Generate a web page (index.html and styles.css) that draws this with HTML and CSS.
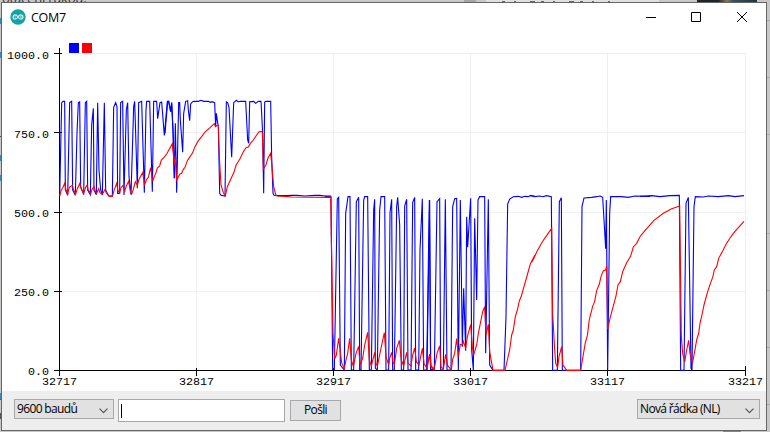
FILE: index.html
```html
<!DOCTYPE html>
<html lang="cs">
<head>
  <meta charset="UTF-8">
  <title>COM7</title>
  <link rel="stylesheet" href="styles.css">
</head>
<body>
  <div class="backdrop">
    <span class="behind-text">otáčení rukou:</span>
    <span class="behind-tab"></span>
    <span class="behind-photo"></span>
    <span class="behind-icon"></span>
    <svg class="behind-marks" width="770" height="432" viewBox="0 0 770 432">
      <path d="M464 1h12" stroke="#a5a5a5" stroke-width="2"/>
      <path d="M502 1.500h108" stroke="#666" stroke-dasharray="3 9 2 14 5 6"/>
      <path d="M767 20.500h3M767 77.500h3M767 134.500h3M767 233.500h3M767 290.500h3M767 347.500h3M767 404.500h3" stroke="#aaa"/>
      <path d="M0 18v6M0 52v6M0 155v6M0 175v6M0 393v6" stroke="#3d87bd" stroke-width="2"/>
      <path d="M0 136v1M0 399v1M0 413v6" stroke="#555" stroke-width="2"/>
    </svg>
  </div>

  <div class="window">
    <div class="titlebar">
      <svg class="logo" width="16" height="16" viewBox="0 0 16 16">
        <circle cx="8" cy="8" r="7.7" fill="#17a1a5"/>
        <path d="M8 8C7 6.500 6.200 5.900 5.200 5.900a2.100 2.100 0 0 0 0 4.200C6.200 10.100 7 9.500 8 8s1.800-2.100 2.800-2.100a2.100 2.100 0 0 1 0 4.200C9.800 10.100 9 9.500 8 8z" fill="none" stroke="#d5f0f0" stroke-width="1.200"/>
        <path d="M4.400 8h1.600M10 8h1.600M10.800 7.200v1.600" stroke="#d5f0f0" stroke-width=".7"/>
      </svg>
      <span class="title">COM7</span>
      <svg class="controls" width="104" height="12" viewBox="0 0 104 12" fill="none" stroke="#000">
        <path d="M0 6.500h10M45.500 1.500h9v9h-9z"/>
        <path d="M91 1l10 10M101 1l-10 10"/>
      </svg>
    </div>

    <svg class="plot" width="764" height="358" viewBox="2 33 764 358">
      <path class="grid" d="M60 53.500h686M60 132.500h686M60 212.500h686M60 291.500h686M196.500 53v317M333.500 53v317M470.500 53v317M607.500 53v317M745.500 53v317"/>
      <rect x="69" y="43" width="10" height="10" fill="#00f"/>
      <rect x="82" y="43" width="10" height="10" fill="#f00"/>
      <path class="axis" d="M59.500 48v328M54 370.500h692M54 53.500h8M54 132.500h8M54 212.500h8M54 291.500h8M196.500 368v8M333.500 368v8M470.500 368v8M607.500 368v8M745.500 366v10"/>

      <g class="blue">
        <polyline transform="translate(55 90) scale(.33333)" points="14,318 20,38 24,34 29,34 31,300 38,316 44,38 50,34 53,300 61,316 66,130 70,38 74,36 77,290 86,314 91,38 95,34 98,300 106,314 110,105 115,55 117,300 124,314 128,38 132,240 137,300 142,314 148,38 152,300 161,318 172,318 176,52 182,38 186,50 188,310 194,310 197,38 203,34 207,315 214,60 218,38 222,260 228,314 236,50 239,34 247,295 251,38 260,34 268,308 273,60 275,34 284,34 292,305 296,34 305,34 308,86 315,38 320,36 328,136 337,34 341,34 347,65 350,38 354,120 358,265"/>
        <polyline transform="translate(165 90) scale(.33333)" points="0,130 8,36 11,34 17,65 20,38 24,120 28,265 31,100 35,308 41,38 44,38 46,90 53,187 56,70 62,34 68,32 70,60 74,92 77,42 82,36 87,34 100,34 108,31 116,34 130,34 136,37 141,35 149,38 152,112 154,70 158,98 160,110 164,310 168,316 180,318 184,36 188,38 192,52 200,202 206,38 214,31 220,36 226,34 242,34 248,150 251,160 254,35 266,34 272,40 280,34 288,34 293,130 296,310 299,36 303,34 317,34 320,200 324,310 327,316 340,317 365,317 380,316 395,316 420,318 450,316 465,316 480,318 498,318"/>
        <polyline transform="translate(325 190) scale(.33333)" points="0,19 18,20 23,538 28,538 36,80 37,26 41,22 46,525 58,540 62,70 69,20 75,20 79,540 86,540 94,35 101,22 104,540 108,540 116,30 119,20 128,20 133,540 139,540 146,60 149,28 151,535 157,540 164,60 168,20 179,20 183,540 191,540 195,68 200,28 203,540 208,540 215,50 218,22 224,105 229,540 236,540 239,48 245,28 249,540 258,540 263,38 269,22 272,540 281,540 285,180 292,26 296,540 306,540 314,30 317,538 328,540"/>
        <polyline transform="translate(425 190) scale(.33333)" points="5,540 13,30 17,540 28,540 36,35 44,26 47,540 55,540 61,28 66,540 78,540 83,50 89,26 95,25 100,540 106,30 112,470 116,295 122,482 125,80 128,172 137,25 140,480 145,540 149,85 155,330 159,30 164,20 179,20 182,490 190,28 194,525 204,541 237,541 243,380 248,42 254,27 265,20 280,19 290,22 300,19 310,20 317,16 330,19"/>
        <polyline transform="translate(530 190) scale(.33333)" points="0,17 15,20 30,18 38,20 50,17 64,20 68,541 82,541 88,35 94,23 97,541 110,541 152,541 156,50 162,24 185,22 200,20 210,18 218,22 227,176 229,30 233,541 239,70 242,20 275,20 295,22 315,18 345,19 360,19"/>
        <polyline transform="translate(640 190) scale(.33333)" points="0,19 20,18 35,17 60,20 90,17 118,16 122,541 132,541 138,40 145,22 153,535 156,541 162,50 166,20 190,21 205,18 235,20 265,17 285,20 312,17"/>
      </g>

      <g class="red">
        <polyline transform="translate(55 90) scale(.33333)" points="14,318 18,302 24,292 29,280 33,300 38,312 43,292 52,286 56,300 62,312 67,296 74,281 79,298 86,310 92,292 96,286 100,300 107,312 112,296 117,290 121,304 125,310 131,296 135,308 142,314 150,298 154,309 160,315 163,319 172,319 177,302 185,280 189,303 194,308 198,293 204,286 209,304 214,288 221,274 226,304 230,312 235,298 241,275 247,286 252,268 263,248 269,284 275,268 280,262 287,233 293,274 297,262 303,248 307,234 314,228 319,210 327,202 335,192 340,183 352,161 358,225"/>
        <polyline transform="translate(165 90) scale(.33333)" points="22,160 30,225 32,216 35,270 45,252 50,250 55,238 60,232 67,212 73,203 82,190 90,170 100,152 110,140 120,126 135,113 148,101 151,108 160,106 163,200 168,285 175,308 181,318 187,290 200,262 207,247 213,226 225,206 235,185 243,173 250,171 256,161 265,150 275,135 282,125 292,124 295,238 303,224 309,204 317,190 320,220 326,290 332,314 336,318 360,319 380,321 497,322"/>
        <polyline transform="translate(325 190) scale(.33333)" points="0,22 17,22 20,200 24,430 29,506 34,495 41,445 46,486 50,518 58,536 63,510 68,490 74,445 79,510 85,530 93,490 101,469 105,525 113,505 119,465 128,427 133,510 139,528 149,487 153,520 157,528 168,475 178,428 183,500 191,525 194,505 200,487 204,515 208,525 215,475 223,451 229,510 236,528 240,510 245,487 249,520 258,528 263,495 269,474 274,515 282,525 292,475 297,520 306,536 314,493 318,530 328,541"/>
        <polyline transform="translate(425 190) scale(.33333)" points="5,534 14,493 18,528 28,536 36,490 44,468 48,530 55,538 62,493 68,527 79,540 83,508 89,490 95,446 100,500 106,463 112,465 115,454 122,475 127,440 137,404 142,470 146,495 155,465 160,430 166,400 173,365 179,350 183,435 190,403 194,485 204,541 240,541 247,510 254,480 260,435 265,420 271,380 277,360 283,333 289,318 297,290 306,258 316,222 323,208 330,195"/>
        <polyline transform="translate(530 190) scale(.33333)" points="5,217 12,204 20,186 32,164 42,148 52,134 65,115 68,370 74,480 77,520 83,532 87,500 95,470 99,525 110,541 152,541 158,505 166,458 172,437 178,388 188,349 194,334 200,302 208,282 213,260 220,242 227,240 230,228 233,418 240,385 248,355 258,318 264,285 271,275 278,245 290,218 302,198 310,171 320,160 330,140"/>
        <polyline transform="translate(640 190) scale(.33333)" points="0,140 18,118 42,91 70,70 95,56 119,48 124,440 128,490 134,516 140,480 146,451 150,490 157,522 163,490 170,450 176,430 180,400 186,375 192,345 203,305 212,278 218,262 223,240 230,230 236,205 248,183 257,165 268,147 280,130 293,115 312,94"/>
      </g>

      <g class="labels" text-anchor="end">
        <text x="49" y="59">1000.0</text>
        <text x="49" y="138">750.0</text>
        <text x="49" y="217">500.0</text>
        <text x="49" y="296">250.0</text>
        <text x="49" y="375">0.0</text>
      </g>
      <g class="labels" text-anchor="middle">
        <text x="59.500" y="385">32717</text>
        <text x="196.500" y="385">32817</text>
        <text x="333.500" y="385">32917</text>
        <text x="470.500" y="385">33017</text>
        <text x="607.500" y="385">33117</text>
        <text x="745.500" y="385">33217</text>
      </g>
    </svg>

    <div class="toolbar">
      <div class="select baud">
        <span>9600 baudů</span>
        <svg width="9" height="6" viewBox="0 0 9 6"><path d="M.5 .7l4 4 4-4"/></svg>
      </div>
      <div class="input"><span class="caret"></span></div>
      <div class="button">Pošli</div>
      <div class="select ending">
        <span>Nová řádka (NL)</span>
        <svg width="9" height="6" viewBox="0 0 9 6"><path d="M.5 .7l4 4 4-4"/></svg>
      </div>
    </div>
  </div>
</body>
</html>
```
FILE: styles.css
```css
* {
  box-sizing: border-box;
}
body {
  margin: 0;
  width: 770px;
  height: 432px;
  overflow: hidden;
  position: relative;
  padding: 2px 0 0 1px;
  background: #c8c8c8;
  font-family: "Open Sans", sans-serif;
}

/* page showing behind the window */
.backdrop span,
.behind-marks {
  position: absolute;
}
.behind-marks {
  left: 0;
  top: 0;
}
.behind-text {
  left: 2px;
  top: -10px;
  font-size: 13px;
  line-height: 16px;
  letter-spacing: -.2px;
  color: #333;
}
.behind-tab {
  left: 486px;
  top: 0;
  width: 173px;
  height: 2px;
  background: #e0e0e0;
}
.behind-photo {
  left: 697px;
  top: 0;
  width: 60px;
  height: 2px;
  background: linear-gradient(90deg, #1c252c 35%, #8a7656 50%, #35525e 60%, #25323c);
}
.behind-icon {
  left: 723px;
  top: 431px;
  width: 18px;
  height: 1px;
  background: #c96f50;
}

.window {
  position: relative;
  width: 766px;
  height: 429px;
  border: 1px solid #666;
  background: #fff;
}
.titlebar {
  display: flex;
  align-items: center;
  height: 30px;
  padding: 0 19px 2px 8px;
}
.title {
  flex: 1;
  margin-left: 5px;
  font-size: 12.5px;
  letter-spacing: -.3px;
}
.controls {
  margin-right: -3px;
}

.plot {
  display: block;
}
.grid {
  stroke: #efefef;
}
.axis {
  stroke: #000;
}
.blue polyline,
.red polyline {
  fill: none;
  vector-effect: non-scaling-stroke;
  stroke-width: 1.1;
}
.blue {
  stroke: #00f;
}
.red {
  stroke: #f00;
}
.labels {
  font-family: "Liberation Mono", monospace;
  font-size: 11.7px;
}

.toolbar {
  display: flex;
  align-items: flex-start;
  height: 39px;
  padding: 8px 6px 0 12px;
  background: #eee;
  font-size: 12px;
  letter-spacing: -.65px;
}
.select {
  display: flex;
  align-items: center;
  justify-content: space-between;
  height: 20px;
  padding: 0 5px 0 2px;
  border: 1px solid #a8a8ac;
  background: #e1e1e1;
}
.select span {
  line-height: 16px;
  margin-top: -1px;
}
.select svg {
  margin-top: 4px;
}
.select path {
  fill: none;
  stroke: #555;
  stroke-width: 1.2;
}
.baud {
  width: 100px;
}
.input {
  width: 167px;
  height: 23px;
  margin-left: 4px;
  padding: 4px 2px;
  border: 1px solid #a8a8ac;
  background: #fff;
}
.caret {
  display: block;
  width: 1px;
  height: 14px;
  background: #000;
}
.button {
  width: 51px;
  height: 21px;
  margin: 1px 0 0 5px;
  border: 1px solid #a8a8ac;
  background: #e1e1e1;
  line-height: 17px;
  text-align: center;
}
.ending {
  width: 123px;
  margin-left: auto;
}
```
